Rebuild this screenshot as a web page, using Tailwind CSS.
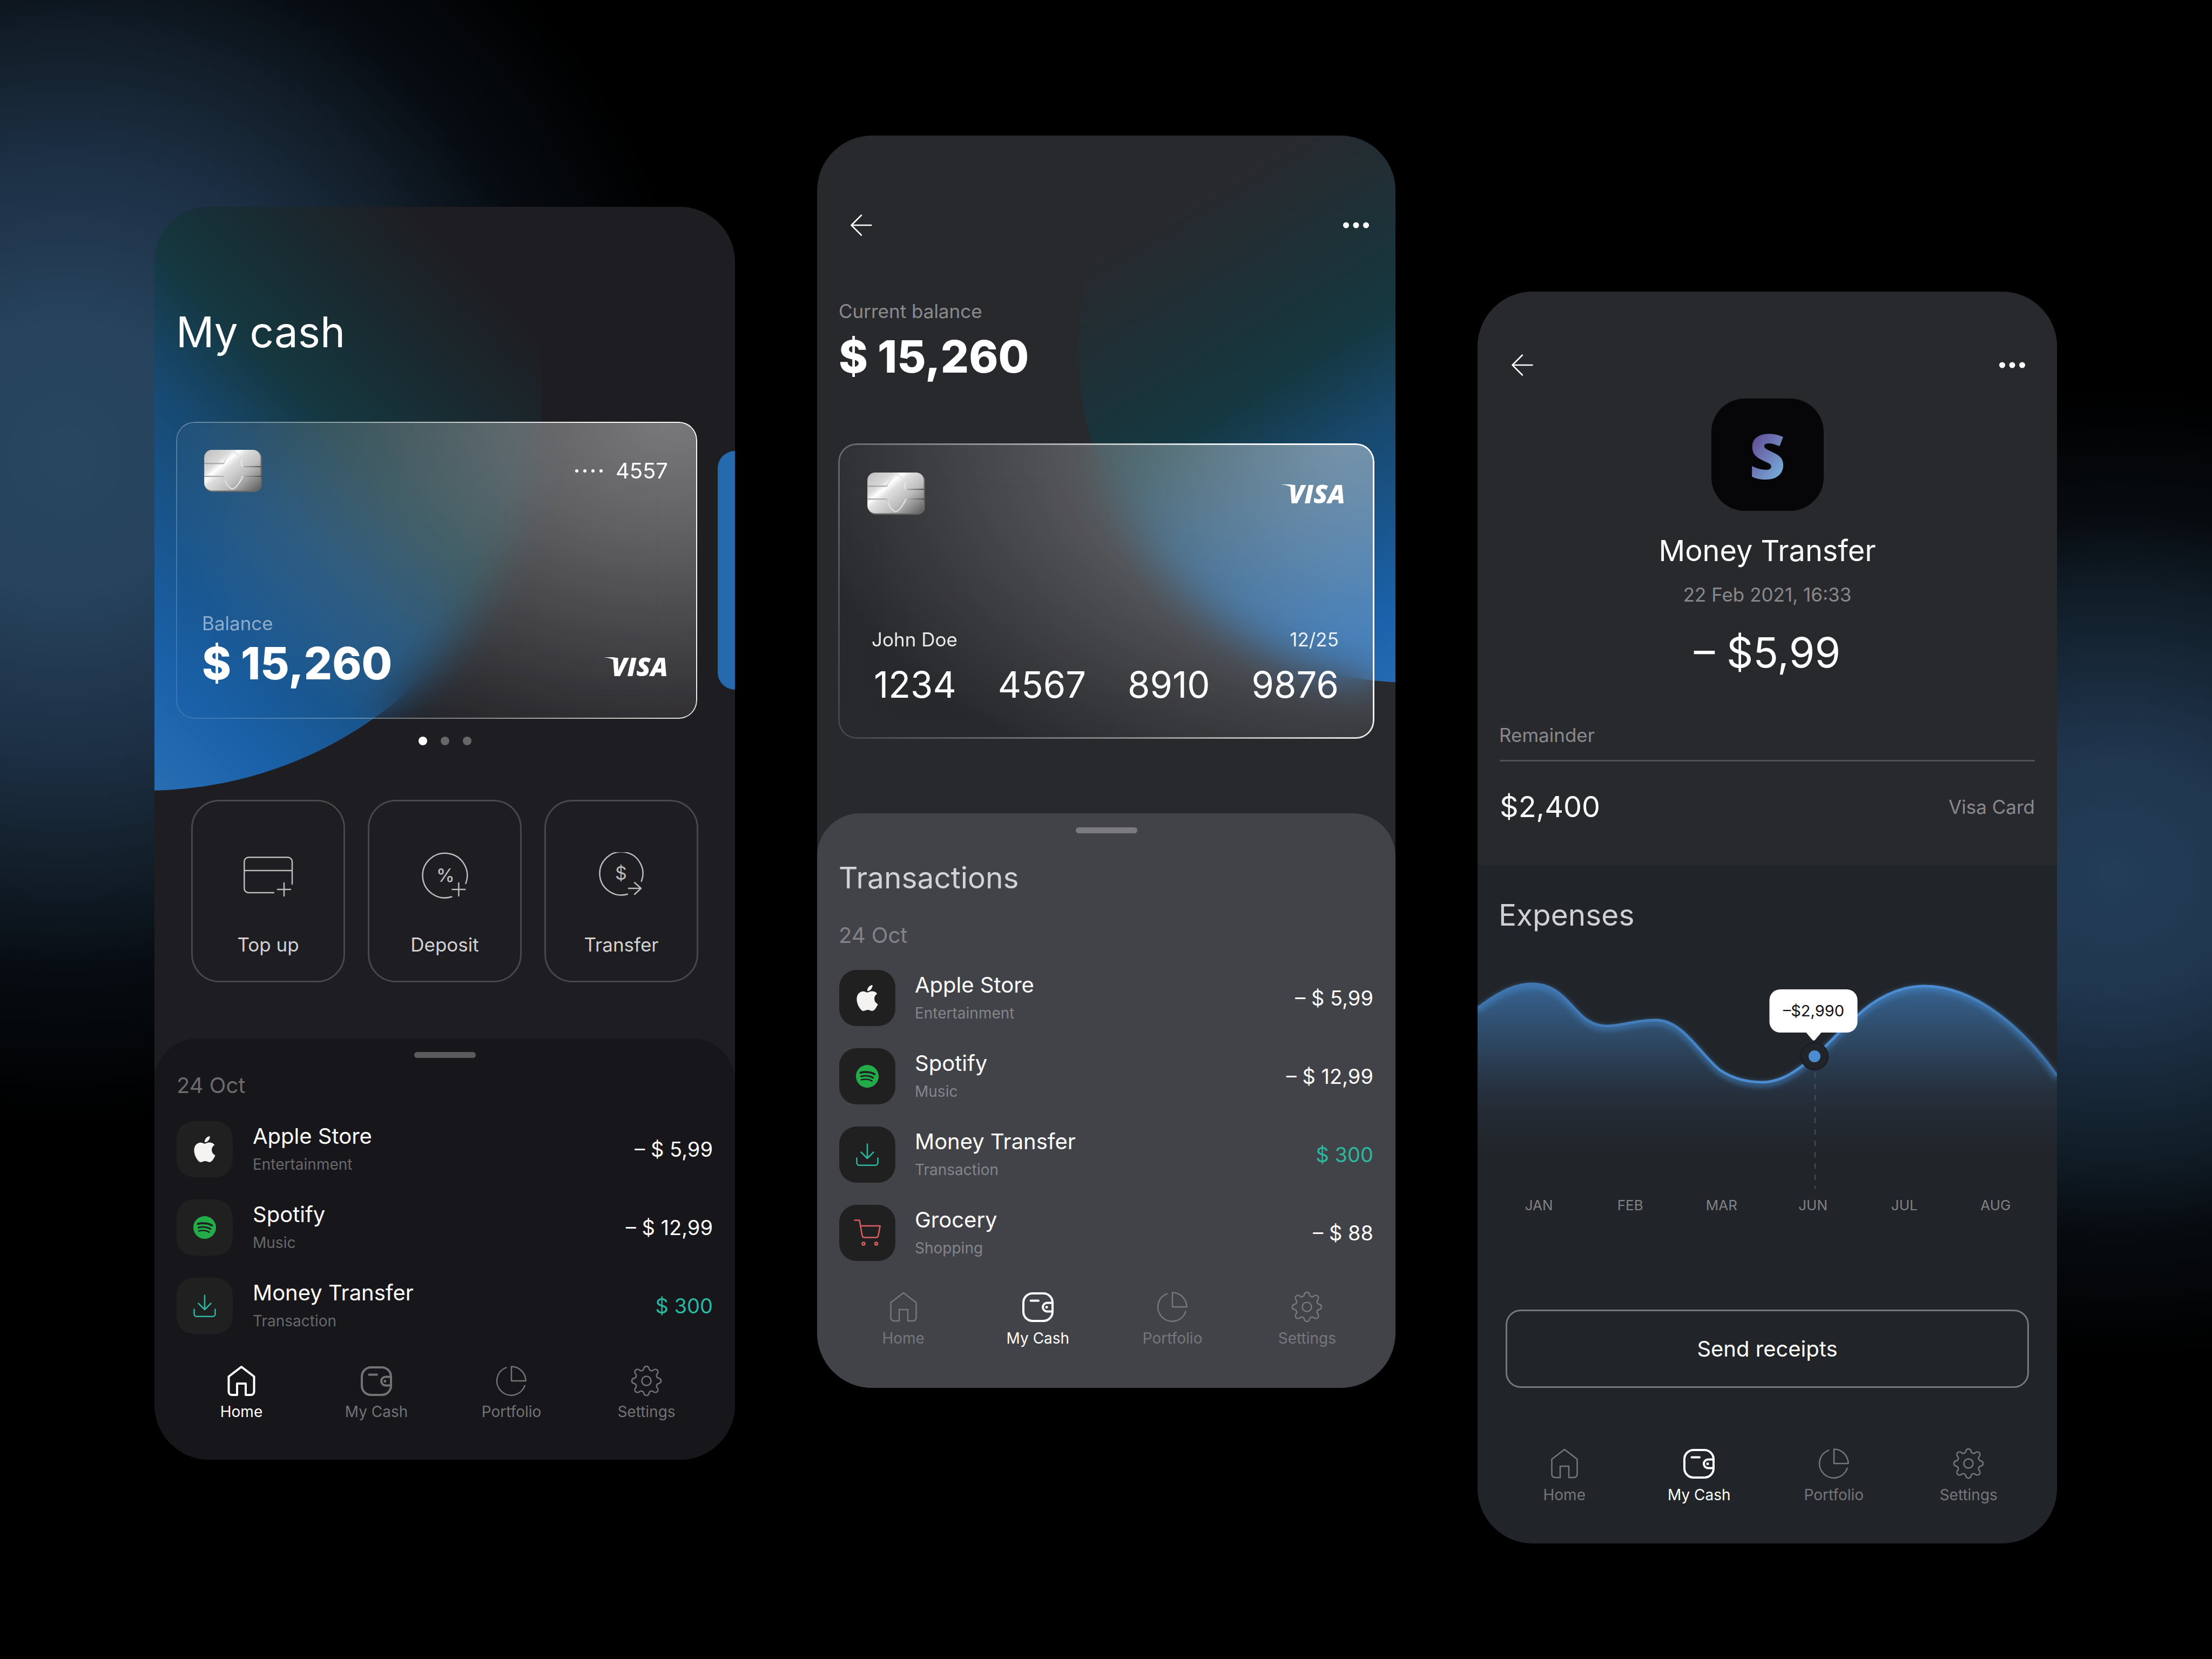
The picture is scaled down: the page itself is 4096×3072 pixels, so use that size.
<!DOCTYPE html>
<html lang="en">
<head>
<meta charset="utf-8">
<meta name="viewport" content="width=device-width, initial-scale=1">
<title>My cash</title>
<script src="https://cdn.jsdelivr.net/npm/@tailwindcss/browser@4"></script>
</head>
<body class="min-h-screen bg-black bg-[radial-gradient(29%_40%_at_3%_27.5%,#28465f_0%,#27435d_20%,#1c2f44_45%,#14212d_60%,#070c12_78%,#00000000_100%),radial-gradient(25%_29%_at_95.6%_52.7%,#233d56_0%,#20364f_25%,#1a2c3f_38%,#111e28_58%,#070b10_75%,#00000000_100%)] font-['Inter',sans-serif] font-normal text-white">

<!-- shared icon symbols -->
<svg class="absolute size-0" aria-hidden="true">
  <symbol id="i-home" viewBox="0 0 62 62" fill="none" stroke="currentColor" stroke-linejoin="round"><path d="M31 5 7.500 23V51a6 6 0 0 0 6 6H23V36H39V57h9.500a6 6 0 0 0 6-6V23Z"/></symbol>
  <symbol id="i-wallet" viewBox="0 0 62 62" fill="none" stroke="currentColor" stroke-linecap="round"><rect x="4" y="6" width="54" height="51" rx="17"/><path d="M17.500 19.500H32M57.500 23.500H48a8 8 0 0 0 0 16h9.500"/><circle cx="47" cy="31.500" r="2.500" fill="currentColor" stroke="none"/></symbol>
  <symbol id="i-pie" viewBox="0 0 62 62" fill="none" stroke="currentColor" stroke-linecap="round" stroke-linejoin="round"><path d="M21.300 6.300A26.500 26.500 0 1 0 55.600 39.800M31 4.500V31H57.500A26.500 26.500 0 0 0 31 4.500Z"/></symbol>
  <symbol id="i-gear" viewBox="-31 -31 62 62" fill="none" stroke="currentColor" stroke-linejoin="round"><path d="M-4.700-23.500A4.900 4.900 0 0 1 4.700-23.500A5 5 0 0 0 13-20A4.900 4.900 0 0 1 20-13A5 5 0 0 0 23.500-4.700A4.900 4.900 0 0 1 23.500 4.700A5 5 0 0 0 20 13A4.900 4.900 0 0 1 13 20A5 5 0 0 0 4.700 23.500A4.900 4.900 0 0 1-4.700 23.500A5 5 0 0 0-13 20A4.900 4.900 0 0 1-20 13A5 5 0 0 0-23.500 4.700A4.900 4.900 0 0 1-23.500-4.700A5 5 0 0 0-20-13A4.900 4.900 0 0 1-13-20A5 5 0 0 0-4.700-23.500Z"/><circle r="8.500"/></symbol>
  <symbol id="i-back" viewBox="0 0 40 40" fill="none" stroke="currentColor" stroke-width="2.500" stroke-linecap="round" stroke-linejoin="round"><path d="M1.500 20H38.500M20 1.500 1.500 20 20 38.500"/></symbol>
  <symbol id="i-more" viewBox="0 0 48 40" fill="currentColor"><circle cx="5.500" cy="20" r="5.500"/><circle cx="24" cy="20" r="5.500"/><circle cx="42.500" cy="20" r="5.500"/></symbol>
  <symbol id="i-apple" viewBox="0 0 24 24" fill="currentColor"><path d="M12.152 6.896c-.948 0-2.415-1.078-3.96-1.04-2.040.027-3.910 1.183-4.961 3.014-2.117 3.675-.546 9.103 1.519 12.090 1.013 1.454 2.208 3.090 3.792 3.039 1.520-.065 2.090-.987 3.935-.987 1.831 0 2.350.987 3.960.948 1.637-.026 2.676-1.480 3.676-2.948 1.156-1.688 1.636-3.325 1.662-3.415-.039-.013-3.182-1.221-3.220-4.857-.026-3.040 2.480-4.494 2.597-4.559-1.429-2.090-3.623-2.324-4.390-2.376-2-.156-3.675 1.090-4.610 1.090zM15.530 3.830c.843-1.012 1.400-2.427 1.245-3.830-1.207.052-2.662.805-3.532 1.818-.780.896-1.454 2.338-1.273 3.714 1.338.104 2.715-.688 3.559-1.701"/></symbol>
  <symbol id="i-spotify" viewBox="0 0 24 24" fill="currentColor"><path d="M12 0C5.400 0 0 5.400 0 12s5.400 12 12 12 12-5.400 12-12S18.660 0 12 0zm5.521 17.340c-.24.359-.66.48-1.021.24-2.820-1.740-6.360-2.101-10.561-1.141-.418.122-.779-.179-.899-.539-.12-.421.18-.78.54-.9 4.560-1.021 8.520-.6 11.640 1.320.42.18.479.659.301 1.020zm1.440-3.300c-.301.42-.841.6-1.262.3-3.239-1.980-8.159-2.580-11.939-1.380-.479.12-1.020-.12-1.140-.6-.12-.48.12-1.021.6-1.141C9.600 9.900 15 10.561 18.720 12.840c.361.181.54.78.241 1.200zm.12-3.360C15.240 8.400 8.820 8.160 5.160 9.301c-.6.179-1.200-.181-1.380-.721-.18-.601.18-1.200.72-1.381 4.260-1.260 11.280-1.020 15.721 1.621.539.3.719 1.020.419 1.560-.299.421-1.020.599-1.559.3z"/></symbol>
  <symbol id="i-download" viewBox="0 0 42 42" fill="none" stroke="currentColor" stroke-width="2.500" stroke-linecap="round" stroke-linejoin="round"><path d="M21 1.500V28M9.500 16.500 21 28 32.500 16.500M1.500 27.500V36a4.700 4.700 0 0 0 4.700 4.700H35.800A4.700 4.700 0 0 0 40.500 36V27.500"/></symbol>
  <symbol id="i-cart" viewBox="0 0 50 50" fill="none" stroke="currentColor" stroke-width="2.500" stroke-linecap="round" stroke-linejoin="round"><path d="M1.500 1.500H10.500L15.500 30a4.500 4.500 0 0 0 4.300 3.500H41a4.500 4.500 0 0 0 4.300-3.500L48.700 12H12.500"/><circle cx="18" cy="45" r="2.500"/><circle cx="41.500" cy="45" r="2.500"/></symbol>
  <symbol id="i-chip" viewBox="0 0 376 275">
    <defs>
      <linearGradient id="chip-face" x1="0" y1="0.100" x2="1" y2="0.950"><stop offset="0" stop-color="#c2c2c2"/><stop offset=".22" stop-color="#d8d8d8"/><stop offset=".32" stop-color="#ffffff"/><stop offset=".42" stop-color="#dedede"/><stop offset=".65" stop-color="#bdbdbd"/><stop offset="1" stop-color="#606060"/></linearGradient>
      <linearGradient id="chip-line" x1="0" y1="0" x2="376" y2="0" gradientUnits="userSpaceOnUse"><stop offset="0" stop-color="#a2a2a2"/><stop offset=".33" stop-color="#b4b4b4"/><stop offset=".36" stop-color="#dedede"/><stop offset=".66" stop-color="#e6e6e6"/><stop offset=".7" stop-color="#a5a5a5"/><stop offset="1" stop-color="#4c4c4c"/></linearGradient>
    </defs>
    <rect x="4" y="5" width="372" height="270" rx="50" fill="#68686a"/>
    <rect width="368" height="266" rx="50" fill="url(#chip-face)"/>
    <path d="M0 89H128C140 62 160 14 185 10 205 12 215 30 232 46M247 62C240 82 240 100 255 110H370M0 173H128C135 212 160 250 185 256 210 250 235 207 252 173H376" fill="none" stroke="url(#chip-line)" stroke-width="8"/>
  </symbol>
</svg>

<main class="grid grid-cols-[1075fr_1071fr_1073fr] items-start gap-[152px] pl-[286px] pr-[287px]">

  <!-- Home -->
  <section class="relative isolate mt-[383px] overflow-hidden rounded-[102px] bg-[#1e1d21]">
    <div class="absolute -left-[749px] -top-[385px] -z-10 size-[1466px] rounded-full bg-[linear-gradient(45deg,#286db2_26%,#1a61a9_34%,#174a73_51%,#15373f_60%,#1e1d2100_79%)]"></div>
    <h1 class="px-10 pt-[184px] text-[78px] leading-[96px]">My cash</h1>

    <div class="mt-[118px] flex items-center gap-[38px] pl-10">
      <article class="relative flex h-[550px] flex-1 flex-col justify-between rounded-[34px] bg-[radial-gradient(95%_115%_at_95%_0%,#ffffff68_0%,#ffffff4a_35%,#ffffff1c_80%,#ffffff00_110%)] pb-[54px] pl-12 pr-[54px] pt-[52px] backdrop-blur-[40px]">
        <div class="pointer-events-none absolute inset-0 rounded-[34px] bg-[linear-gradient(65deg,#ffffff20_0%,#ffffff70_45%,#fffffff2_85%)] p-[2px] [mask:linear-gradient(#000_0_0)_content-box_exclude,linear-gradient(#000_0_0)]"></div>
        <div class="flex items-center justify-between">
          <svg class="ml-1 h-[78px] w-[107px]" aria-hidden="true"><use href="#i-chip"/></svg>
          <p class="flex items-center gap-6 text-[40px] leading-[56px]">
            <span class="flex gap-[9px]" aria-hidden="true"><i class="size-[6px] rounded-full bg-white"></i><i class="size-[6px] rounded-full bg-white"></i><i class="size-[6px] rounded-full bg-white"></i><i class="size-[6px] rounded-full bg-white"></i></span>
            <span>4557</span>
          </p>
        </div>
        <div class="flex items-end justify-between">
          <div>
            <p class="text-[35px] leading-[48px] text-white/50">Balance</p>
            <p class="pt-[3px] text-[82px] font-extrabold leading-[96px]">$ 15,260</p>
          </div>
          <div class="flex items-start pb-[18px]">
            <svg class="-mr-[14px] mt-[8px] h-3 w-7" viewBox="0 0 28 12" fill="currentColor" aria-hidden="true"><path d="M0 0H18Q24 0 25 6L27 12Q20 2 0 0Z"/></svg>
            <span class="font-['Open_Sans',sans-serif] text-[48px] font-extrabold italic leading-[50px]">VISA</span>
          </div>
        </div>
      </article>
      <div class="h-[442px] w-8 rounded-l-[32px] bg-[#266aae]"></div>
    </div>

    <div class="mt-[33px] flex justify-center gap-[25px]">
      <button class="size-4 rounded-full bg-white" aria-label="Card 1"></button>
      <button class="size-4 rounded-full bg-[#67676a]" aria-label="Card 2"></button>
      <button class="size-4 rounded-full bg-[#67676a]" aria-label="Card 3"></button>
    </div>

    <div class="mt-[101px] grid grid-cols-3 gap-[42px] px-[68px] text-[35px] leading-[48px] text-[#d2d2d3]">
      <button class="flex h-[338px] flex-col items-center rounded-[52px] border-[3px] border-[#48484b] pt-[94px]">
        <svg class="h-[90px] w-24 text-[#bcbcbd]" viewBox="0 0 96 90" fill="none" stroke="currentColor" stroke-width="2.500" stroke-linecap="round" aria-hidden="true"><path d="M92 59V17.500a8 8 0 0 0-8-8H11.300a8 8 0 0 0-8 8V67a8 8 0 0 0 8 8H58M3.300 34H92M77 57v24M65 69h24"/></svg>
        <span class="mt-[57px]">Top up</span>
      </button>
      <button class="flex h-[338px] flex-col items-center rounded-[52px] border-[3px] border-[#48484b] pt-[94px]">
        <svg class="h-[90px] w-24 text-[#bcbcbd]" viewBox="0 0 96 90" fill="none" stroke="currentColor" stroke-width="2.500" stroke-linecap="round" aria-hidden="true"><path d="M86.500 57.800A41.300 41.300 0 1 0 60.400 82.500M73.400 57v24M61.400 69h24"/><text x="49" y="55" text-anchor="middle" fill="currentColor" stroke="none" font-size="34" font-weight="500">%</text></svg>
        <span class="mt-[57px]">Deposit</span>
      </button>
      <button class="flex h-[338px] flex-col items-center rounded-[52px] border-[3px] border-[#48484b] pt-[94px]">
        <svg class="h-[90px] w-24 text-[#bcbcbd]" viewBox="0 0 96 90" fill="none" stroke="currentColor" stroke-width="2.500" stroke-linecap="round" stroke-linejoin="round" aria-hidden="true"><path d="M84.800 53.800A40 40 0 1 0 58.800 77.800M61 67H84M72 56.300 84 67 72 78"/><text x="47" y="51" text-anchor="middle" fill="currentColor" stroke="none" font-size="34" font-weight="400">$</text></svg>
        <span class="mt-[57px]">Transfer</span>
      </button>
    </div>

    <div class="mt-[104px] rounded-t-[80px] bg-[#17161a] pb-[69px] pt-[25px]">
      <div class="mx-auto h-[11px] w-[114px] rounded-full bg-[#5b5b5d]"></div>
      <h2 class="mt-[23px] px-[41px] text-[40px] leading-[56px] text-[#6c6c6e]">24 Oct</h2>
      <ul class="mt-[38px] flex flex-col gap-[41px] px-[41px]">
        <li class="flex items-center">
          <span class="grid size-[104px] place-items-center rounded-[32px] bg-[#202020]"><svg class="size-12 text-[#f5f3f1]" aria-hidden="true"><use href="#i-apple"/></svg></span>
          <div class="ml-[37px] flex-1"><p class="text-[40px] leading-[56px]">Apple Store</p><p class="text-[28px] leading-[48px] text-[#68686b]">Entertainment</p></div>
          <p class="text-[38px] leading-[56px]">– $ 5,99</p>
        </li>
        <li class="flex items-center">
          <span class="grid size-[104px] place-items-center rounded-[32px] bg-[#202020]"><svg class="size-[42px] text-[#22ac4a]" aria-hidden="true"><use href="#i-spotify"/></svg></span>
          <div class="ml-[37px] flex-1"><p class="text-[40px] leading-[56px]">Spotify</p><p class="text-[28px] leading-[48px] text-[#68686b]">Music</p></div>
          <p class="text-[38px] leading-[56px]">– $ 12,99</p>
        </li>
        <li class="flex items-center">
          <span class="grid size-[104px] place-items-center rounded-[32px] bg-[#202020]"><svg class="size-[42px] text-[#2bb8a0]" aria-hidden="true"><use href="#i-download"/></svg></span>
          <div class="ml-[37px] flex-1"><p class="text-[40px] leading-[56px]">Money Transfer</p><p class="text-[28px] leading-[48px] text-[#68686b]">Transaction</p></div>
          <p class="text-[38px] leading-[56px] text-[#2bb8a0]">$ 300</p>
        </li>
      </ul>
      <nav class="mt-[56px] grid grid-cols-4 pl-[36px] pr-[39px] text-[28px] leading-[40px] text-[#737375]">
        <a href="#" class="flex flex-col items-center gap-[6px] text-white"><svg class="size-[62px]" stroke-width="4" aria-hidden="true"><use href="#i-home"/></svg>Home</a>
        <a href="#" class="flex flex-col items-center gap-[6px]"><svg class="size-[62px]" stroke-width="4" aria-hidden="true"><use href="#i-wallet"/></svg>My Cash</a>
        <a href="#" class="flex flex-col items-center gap-[6px]"><svg class="size-[62px]" stroke-width="2.500" aria-hidden="true"><use href="#i-pie"/></svg>Portfolio</a>
        <a href="#" class="flex flex-col items-center gap-[6px]"><svg class="size-[62px]" stroke-width="2.500" aria-hidden="true"><use href="#i-gear"/></svg>Settings</a>
      </nav>
    </div>
  </section>

  <!-- Card details -->
  <section class="relative isolate mt-[251px] overflow-hidden rounded-[102px] bg-[#28292d]">
    <div class="absolute -right-[645px] -top-[219px] -z-10 size-[1232px] rounded-full bg-[linear-gradient(329deg,#256bb2_19%,#1a61a9_27%,#18486c_45%,#15373f_55%,#28292d00_77%)]"></div>
    <header class="flex justify-between pl-[62px] pr-[49px] pt-[146px]">
      <button aria-label="Back"><svg class="size-10"><use href="#i-back"/></svg></button>
      <button aria-label="More"><svg class="h-10 w-12"><use href="#i-more"/></svg></button>
    </header>
    <p class="mt-[115px] px-10 text-[35px] leading-[48px] text-[#8b8b8e]">Current balance</p>
    <p class="mt-[13px] px-10 text-[82px] font-extrabold leading-[96px]">$ 15,260</p>

    <article class="relative mx-[39px] mt-[112px] flex h-[547px] flex-col rounded-[34px] bg-[radial-gradient(95%_115%_at_95%_0%,#ffffff68_0%,#ffffff4a_35%,#ffffff1c_80%,#ffffff00_110%)] px-[54px] pt-[54px] backdrop-blur-[40px]">
      <div class="pointer-events-none absolute inset-0 rounded-[34px] bg-[linear-gradient(65deg,#ffffff20_0%,#ffffff70_45%,#fffffff2_85%)] p-[3px] [mask:linear-gradient(#000_0_0)_content-box_exclude,linear-gradient(#000_0_0)]"></div>
      <div class="flex items-center justify-between">
        <svg class="h-[78px] w-[107px]" aria-hidden="true"><use href="#i-chip"/></svg>
        <div class="flex items-start">
          <svg class="-mr-[14px] mt-[8px] h-3 w-7" viewBox="0 0 28 12" fill="currentColor" aria-hidden="true"><path d="M0 0H18Q24 0 25 6L27 12Q20 2 0 0Z"/></svg>
          <span class="font-['Open_Sans',sans-serif] text-[48px] font-extrabold italic leading-[50px]">VISA</span>
        </div>
      </div>
      <div class="mt-[207px] flex justify-between pl-2 pr-3 text-[35px] leading-[48px] text-white/90"><span>John Doe</span><span>12/25</span></div>
      <p class="mt-[20px] flex justify-between px-3 text-[67px] leading-[80px]"><span>1234</span><span>4567</span><span>8910</span><span>9876</span></p>
    </article>

    <div class="mt-[138px] rounded-t-[80px] bg-[#414349] pb-[72px] pt-[26px]">
      <div class="mx-auto h-[11px] w-[114px] rounded-full bg-[#7b7b7f]"></div>
      <h2 class="mt-[50px] px-10 text-[55px] leading-[64px] text-[#d2d3d5]">Transactions</h2>
      <h3 class="mt-[47px] px-10 text-[40px] leading-[56px] text-[#828388]">24 Oct</h3>
      <ul class="mt-[36px] flex flex-col gap-[41px] px-[41px]">
        <li class="flex items-center">
          <span class="grid size-[104px] place-items-center rounded-[32px] bg-[#202020]"><svg class="size-12 text-[#f5f3f1]" aria-hidden="true"><use href="#i-apple"/></svg></span>
          <div class="ml-[36px] flex-1"><p class="text-[40px] leading-[56px]">Apple Store</p><p class="text-[28px] leading-[48px] text-[#84858a]">Entertainment</p></div>
          <p class="text-[38px] leading-[56px]">– $ 5,99</p>
        </li>
        <li class="flex items-center">
          <span class="grid size-[104px] place-items-center rounded-[32px] bg-[#202020]"><svg class="size-[42px] text-[#22ac4a]" aria-hidden="true"><use href="#i-spotify"/></svg></span>
          <div class="ml-[36px] flex-1"><p class="text-[40px] leading-[56px]">Spotify</p><p class="text-[28px] leading-[48px] text-[#84858a]">Music</p></div>
          <p class="text-[38px] leading-[56px]">– $ 12,99</p>
        </li>
        <li class="flex items-center">
          <span class="grid size-[104px] place-items-center rounded-[32px] bg-[#202020]"><svg class="size-[42px] text-[#2bb8a0]" aria-hidden="true"><use href="#i-download"/></svg></span>
          <div class="ml-[36px] flex-1"><p class="text-[40px] leading-[56px]">Money Transfer</p><p class="text-[28px] leading-[48px] text-[#84858a]">Transaction</p></div>
          <p class="text-[38px] leading-[56px] text-[#2bb8a0]">$ 300</p>
        </li>
        <li class="flex items-center">
          <span class="grid size-[104px] place-items-center rounded-[32px] bg-[#202020]"><svg class="size-[50px] text-[#dd5e60]" aria-hidden="true"><use href="#i-cart"/></svg></span>
          <div class="ml-[36px] flex-1"><p class="text-[40px] leading-[56px]">Grocery</p><p class="text-[28px] leading-[48px] text-[#84858a]">Shopping</p></div>
          <p class="text-[38px] leading-[56px]">– $ 88</p>
        </li>
      </ul>
      <nav class="mt-[54px] grid grid-cols-4 pl-[35px] pr-[39px] text-[28px] leading-[40px] text-[#76777c]">
        <a href="#" class="flex flex-col items-center gap-[7px]"><svg class="size-[62px]" stroke-width="2.500" aria-hidden="true"><use href="#i-home"/></svg>Home</a>
        <a href="#" class="flex flex-col items-center gap-[7px] text-white"><svg class="size-[62px]" stroke-width="4" aria-hidden="true"><use href="#i-wallet"/></svg>My Cash</a>
        <a href="#" class="flex flex-col items-center gap-[7px]"><svg class="size-[62px]" stroke-width="2.500" aria-hidden="true"><use href="#i-pie"/></svg>Portfolio</a>
        <a href="#" class="flex flex-col items-center gap-[7px]"><svg class="size-[62px]" stroke-width="2.500" aria-hidden="true"><use href="#i-gear"/></svg>Settings</a>
      </nav>
    </div>
  </section>

  <!-- Transaction details -->
  <section class="mt-[540px] overflow-hidden rounded-[102px] bg-[#212428]">
    <div class="bg-[#28292d] pb-[72px] pt-[116px]">
      <header class="flex justify-between pl-[63px] pr-[59px]">
        <button aria-label="Back"><svg class="size-10"><use href="#i-back"/></svg></button>
        <button aria-label="More"><svg class="h-10 w-12"><use href="#i-more"/></svg></button>
      </header>
      <div class="mt-[42px] flex flex-col items-center">
        <div class="grid size-[208px] place-items-center rounded-[62px] bg-[#060608]">
          <span class="bg-linear-to-br from-[#63559a] from-25% to-[#74a9d8] to-80% bg-clip-text px-2 font-['Open_Sans',sans-serif] text-[116px] font-extrabold leading-[116px] text-transparent">S</span>
        </div>
        <h2 class="mt-[38px] text-[54px] leading-[72px]">Money Transfer</h2>
        <p class="mt-[21px] text-[35px] leading-[48px] text-[#88898c]">22 Feb 2021, 16:33</p>
        <p class="mt-[35px] text-[77px] leading-[96px]">– $5,99</p>
      </div>
      <p class="mt-[81px] px-[40px] text-[35px] leading-[48px] text-[#88898c]">Remainder</p>
      <hr class="mx-[41px] mt-[22px] border-t-[3px] border-[#515255]">
      <div class="mt-[48px] flex items-center justify-between px-[41px] leading-[72px]"><span class="text-[54px]">$2,400</span><span class="text-[35px] text-[#88898c]">Visa Card</span></div>
    </div>

    <div class="pb-[70px] pt-[60px]">
      <h2 class="px-[39px] text-[55px] leading-[64px] text-[#d0d1d2]">Expenses</h2>
      <div class="relative mt-[64px]">
        <svg class="block w-full" viewBox="0 0 1073 420" fill="none" role="img" aria-label="Expenses by month">
          <defs>
            <linearGradient id="area" x1="0" y1="30" x2="0" y2="360" gradientUnits="userSpaceOnUse"><stop offset="0" stop-color="#4489d0" stop-opacity=".64"/><stop offset=".35" stop-color="#3f78b2" stop-opacity=".4"/><stop offset=".7" stop-color="#365a88" stop-opacity=".14"/><stop offset="1" stop-color="#365a88" stop-opacity="0"/></linearGradient>
            <linearGradient id="line" x1="0" y1="0" x2="1073" y2="0" gradientUnits="userSpaceOnUse"><stop offset="0" stop-color="#3f72a8"/><stop offset=".35" stop-color="#4480c0"/><stop offset=".45" stop-color="#4a8ccf"/><stop offset=".8" stop-color="#4a8ccf"/><stop offset="1" stop-color="#3c6da1"/></linearGradient>
            <filter id="glow" x="-5%" y="-20%" width="110%" height="150%"><feGaussianBlur stdDeviation="5"/></filter>
          </defs>
          <path d="M0 77C32 52 65 32 101 32 150 32 170 71 193 91 206 103 222 110 241 110 268 110 290 99 330 99 380 99 410 160 448 191 470 206 497 214 528 214 565 214 596 189 624 166 655 140 676 112 702 92 735 60 780 36 827 36 925 36 1015 120 1073 202V360H0Z" fill="url(#area)"/>
          <path d="M0 81C32 56 65 36 101 36 150 36 170 75 193 95 206 107 222 114 241 114 268 114 290 103 330 103 380 103 410 164 448 195 470 210 497 218 528 218 565 218 596 193 624 170 655 144 676 116 702 96 735 64 780 40 827 40 925 40 1015 124 1073 206" stroke="#4489d0" stroke-opacity=".55" stroke-width="10" filter="url(#glow)"/>
          <path d="M0 77C32 52 65 32 101 32 150 32 170 71 193 91 206 103 222 110 241 110 268 110 290 99 330 99 380 99 410 160 448 191 470 206 497 214 528 214 565 214 596 189 624 166 655 140 676 112 702 92 735 60 780 36 827 36 925 36 1015 120 1073 202" stroke="url(#line)" stroke-width="5"/>
          <path d="M625 196V412" stroke="#4b4e52" stroke-width="2" stroke-dasharray="10 11"/>
          <circle cx="624" cy="166" r="25" fill="#212428" stroke="#191b1e" stroke-width="2"/>
          <circle cx="624" cy="166" r="11" fill="#4a8ccf"/>
        </svg>
        <div class="absolute left-[58%] top-[10%] flex -translate-x-1/2 flex-col items-center">
          <p class="grid h-20 w-[163px] place-items-center rounded-[20px] bg-white text-[29px] leading-[40px] text-[#111214]">–$2,990</p>
          <svg class="h-4 w-7" viewBox="0 0 28 16" fill="white" aria-hidden="true"><path d="M0 0H28L16.500 13.500Q14 16 11.500 13.500Z"/></svg>
        </div>
      </div>
      <div class="mt-[2px] grid grid-cols-6 px-[29px] text-center text-[26px] leading-[40px] text-[#808285]"><span>JAN</span><span>FEB</span><span>MAR</span><span>JUN</span><span>JUL</span><span>AUG</span></div>
      <div class="mt-[173px] px-[52px]">
        <button class="h-[145px] w-full rounded-[28px] border-[3px] border-[#76797b] text-[40px] leading-[56px]">Send receipts</button>
      </div>
      <nav class="mt-[109px] grid grid-cols-4 pl-[36px] pr-[39px] text-[28px] leading-[40px] text-[#75777a]">
        <a href="#" class="flex flex-col items-center gap-[7px]"><svg class="size-[62px]" stroke-width="2.500" aria-hidden="true"><use href="#i-home"/></svg>Home</a>
        <a href="#" class="flex flex-col items-center gap-[7px] text-white"><svg class="size-[62px]" stroke-width="4" aria-hidden="true"><use href="#i-wallet"/></svg>My Cash</a>
        <a href="#" class="flex flex-col items-center gap-[7px]"><svg class="size-[62px]" stroke-width="2.500" aria-hidden="true"><use href="#i-pie"/></svg>Portfolio</a>
        <a href="#" class="flex flex-col items-center gap-[7px]"><svg class="size-[62px]" stroke-width="2.500" aria-hidden="true"><use href="#i-gear"/></svg>Settings</a>
      </nav>
    </div>
  </section>
</main>
</body>
</html>
